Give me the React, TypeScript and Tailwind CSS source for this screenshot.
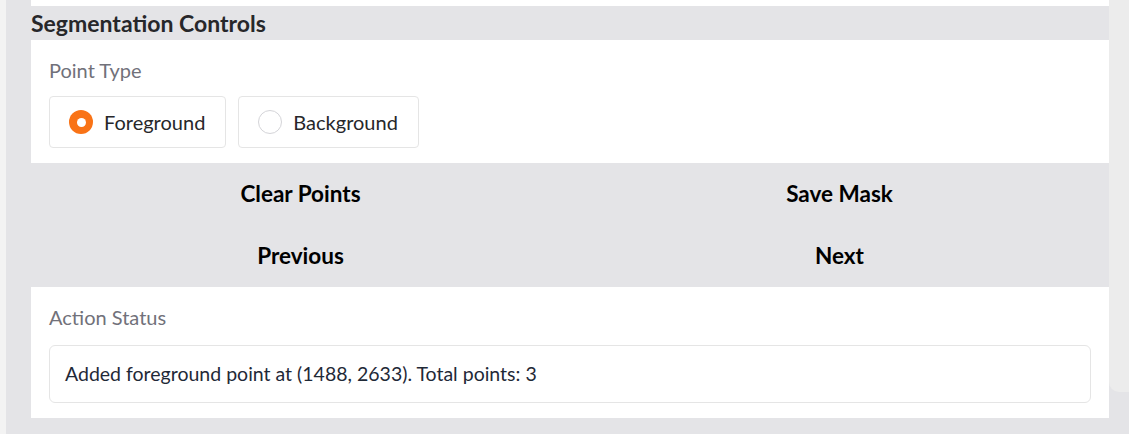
import { useState } from "react";

type PointType = "foreground" | "background";

const pointOptions: { label: string; value: PointType }[] = [
  { label: "Foreground", value: "foreground" },
  { label: "Background", value: "background" },
];

const actions = ["Clear Points", "Save Mask", "Previous", "Next"];

function RadioOption({
  checked,
  label,
  onSelect,
}: {
  checked: boolean;
  label: string;
  onSelect: () => void;
}) {
  return (
    <button
      className="flex h-[52px] items-center gap-[11px] rounded-[4px] border border-[#e5e5e5] bg-white pl-[19px] pr-[20px] text-[20px] text-[#27272a]"
      onClick={onSelect}
      type="button"
    >
      {checked ? (
        <span className="grid h-[24px] w-[24px] place-items-center rounded-full bg-[#f97316]">
          <span className="h-[9px] w-[9px] rounded-full bg-white" />
        </span>
      ) : (
        <span className="h-[24px] w-[24px] rounded-full border border-[#d4d4d8] bg-white" />
      )}
      <span>{label}</span>
    </button>
  );
}

export default function App() {
  const [pointType, setPointType] = useState<PointType>("foreground");

  return (
    <div
      className="flex h-[434px] w-[1129px] overflow-hidden bg-[#ececec]"
      style={{ fontFamily: "Lato, 'Noto Sans', sans-serif" }}
    >
      <div className="w-[6px] shrink-0 bg-[#f3f3f3]" />
      <div className="relative flex flex-1 flex-col bg-[#e4e4e7] pl-[25px] pr-[20px]">
        <div className="h-[6px] bg-white" />
        <h2 className="flex h-[34px] items-center text-[23px] font-bold text-[#27272a]">
          Segmentation Controls
        </h2>

        <div className="flex h-[123px] flex-col bg-white px-[18px] pt-[17px]">
          <p className="text-[20px] leading-[26px] text-[#71717a]">Point Type</p>
          <div className="mt-[13px] flex gap-[12px]">
            {pointOptions.map((option) => (
              <RadioOption
                checked={pointType === option.value}
                key={option.value}
                label={option.label}
                onSelect={() => setPointType(option.value)}
              />
            ))}
          </div>
        </div>

        <div className="grid grid-cols-2">
          {actions.map((action) => (
            <button
              className="h-[62px] text-[22.5px] font-bold text-black"
              key={action}
              type="button"
            >
              {action}
            </button>
          ))}
        </div>

        <div className="flex h-[131px] flex-col bg-white px-[18px] pt-[17px]">
          <p className="text-[20px] leading-[26px] text-[#71717a]">Action Status</p>
          <div className="mt-[15px] flex h-[58px] items-center rounded-[6px] border border-[#e5e5e5] px-[15px] text-[19.5px] text-[#1f2937]">
            Added foreground point at (1488, 2633). Total points: 3
          </div>
        </div>

        <div className="absolute right-0 top-0 h-[392px] w-[20px] rounded-bl-[10px] bg-[#ececec]" />
      </div>
    </div>
  );
}
